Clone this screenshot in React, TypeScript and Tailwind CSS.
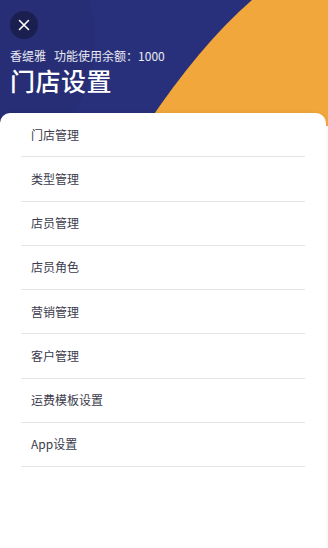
import React from "react";

const items = [
  "门店管理",
  "类型管理",
  "店员管理",
  "店员角色",
  "营销管理",
  "客户管理",
  "运费模板设置",
  "App设置",
];

export default function App() {
  return (
    <div
      className="w-[328px] h-[548px] bg-white overflow-hidden"
      style={{ fontFamily: '"Noto Sans CJK SC", "Noto Sans", sans-serif' }}
    >
      <div className="relative h-[126px] bg-[#29307b] overflow-hidden">
        <svg
          className="absolute inset-0"
          width="328"
          height="126"
          viewBox="0 0 328 126"
        >
          <circle cx="-40" cy="40" r="135" fill="#272e76" />
          <path d="M252,0 Q200,45 146,126 L328,126 L328,0 Z" fill="#f1a73c" />
        </svg>
        <div className="relative flex flex-col px-[10px] pt-[11px]">
          <button className="w-[28px] h-[28px] rounded-full bg-[#1b1f4f] flex items-center justify-center">
            <svg width="12" height="12" viewBox="0 0 12 12">
              <path
                d="M1.5 1.5 L10.5 10.5 M10.5 1.5 L1.5 10.5"
                stroke="#ffffff"
                strokeWidth="1.6"
                strokeLinecap="round"
              />
            </svg>
          </button>
          <div className="mt-[9px] text-[12px] leading-[16px] text-white/90 whitespace-pre">
            香缇雅   功能使用余额：1000
          </div>
          <div className="mt-[1px] text-[25px] leading-[30px] font-medium text-white tracking-[0.5px]">
            门店设置
          </div>
        </div>
      </div>
      <div className="relative -mt-[13px] mr-[2px] bg-white rounded-t-[10px] shadow-[0_0_4px_rgba(0,0,0,0.08)] min-h-[450px]">
        <div className="mx-[21px]">
          {items.map((t) => (
            <div
              key={t}
              className="h-[44.25px] flex items-center pl-[10px] border-b border-[#e3e3e8] text-[12px] text-[#3b3b4d]"
            >
              {t}
            </div>
          ))}
        </div>
      </div>
    </div>
  );
}
